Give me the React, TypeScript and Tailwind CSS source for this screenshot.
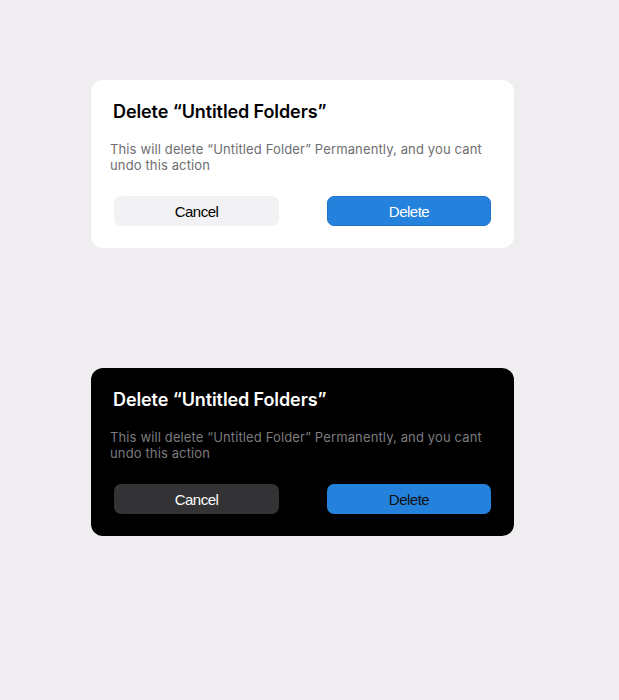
type DialogProps = {
  dark?: boolean
}

function DeleteDialog({ dark = false }: DialogProps) {
  return (
    <div
      className={`w-[423px] h-[168px] rounded-[12px] flex flex-col ${
        dark ? "bg-black" : "bg-white"
      }`}
    >
      <h2
        className={`pt-[20px] pl-[22px] text-[18px] leading-[24px] font-semibold tracking-[-0.1px] ${
          dark ? "text-white" : "text-black"
        }`}
      >
        Delete “Untitled Folders”
      </h2>
      <p
        className={`mt-[17px] pl-[19px] w-[405px] text-[13px] leading-[16px] tracking-[0.13px] ${
          dark ? "text-[#7b7b7e]" : "text-[#6e6e72]"
        }`}
      >
        This will delete “Untitled Folder” Permanently, and you cant undo this action
      </p>
      <div className="mt-[23px] px-[23px] flex justify-between">
        <button
          className={`w-[165px] h-[30px] pt-[2px] rounded-[7px] text-[15px] tracking-[-0.5px] font-['Liberation_Sans',Arial,sans-serif] ${
            dark ? "bg-[#333235] text-white" : "bg-[#f2f1f4] text-black"
          }`}
        >
          Cancel
        </button>
        <button
          className={`w-[164px] h-[30px] pt-[2px] rounded-[7px] bg-[#2482dd] text-[15px] tracking-[-0.5px] font-['Liberation_Sans',Arial,sans-serif] ${
            dark ? "text-[#111]" : "text-white border border-[#1f74c8]"
          }`}
        >
          Delete
        </button>
      </div>
    </div>
  )
}

export default function App() {
  return (
    <div className="min-h-[700px] w-full bg-[#efedf0] font-['Inter',sans-serif] pt-[80px] pl-[91px] flex flex-col gap-[120px]">
      <DeleteDialog />
      <DeleteDialog dark />
    </div>
  )
}
